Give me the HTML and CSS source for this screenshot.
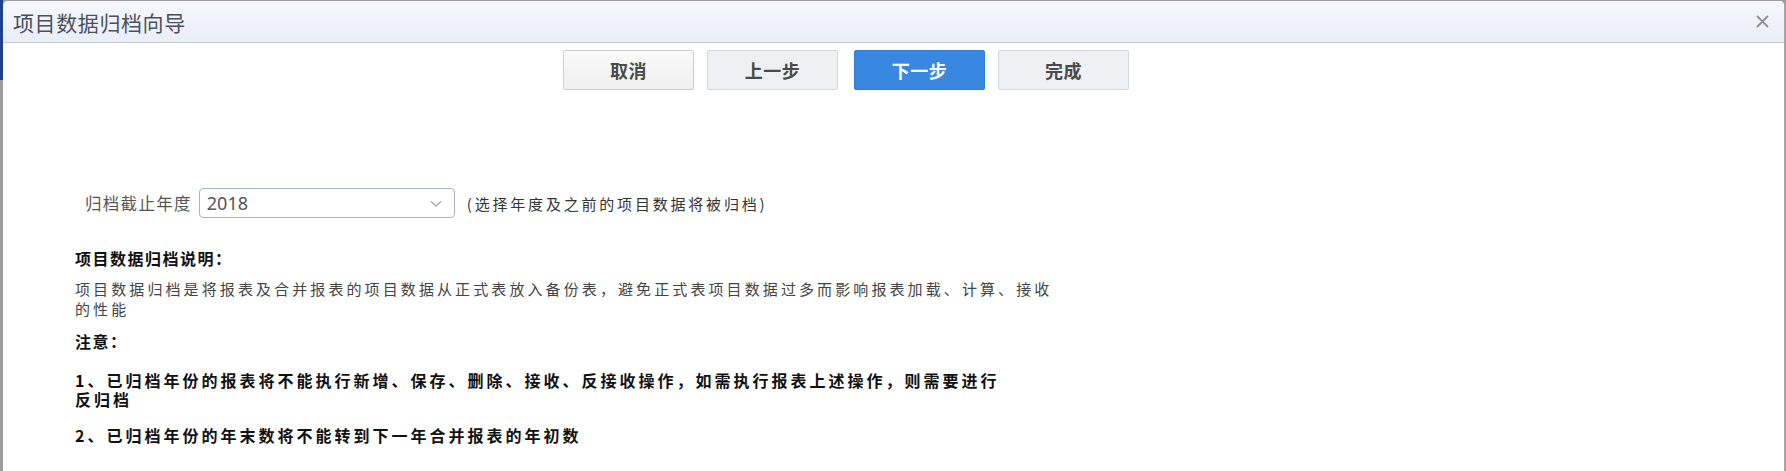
FILE: index.html
```html
<!DOCTYPE html>
<html lang="zh-CN">
<head>
<meta charset="utf-8">
<title>项目数据归档向导</title>
<link rel="stylesheet" href="styles.css">
</head>
<body>
<div class="dialog">
  <div class="titlebar">
    <span class="title">项目数据归档向导</span>
    <span class="close">
      <svg width="13" height="13" viewBox="0 0 13 13"><path d="M1.5 1.5 L11.5 11.5 M11.5 1.5 L1.5 11.5" stroke="#8d9199" stroke-width="1.8" stroke-linecap="round"/></svg>
    </span>
  </div>
  <div class="toolbar">
    <button class="btn btn-cancel">取消</button>
    <button class="btn">上一步</button>
    <button class="btn btn-primary">下一步</button>
    <button class="btn">完成</button>
  </div>
  <div class="form-row">
    <span class="label">归档截止年度</span>
    <div class="select">
      <span class="value">2018</span>
      <svg class="chev" width="12" height="8" viewBox="0 0 12 8"><path d="M1 1.5 L6 6 L11 1.5" fill="none" stroke="#a4a9b2" stroke-width="1.4"/></svg>
    </div>
    <span class="hint">(选择年度及之前的项目数据将被归档)</span>
  </div>
  <div class="notes">
    <div class="heading">项目数据归档说明：</div>
    <p class="desc">项目数据归档是将报表及合并报表的项目数据从正式表放入备份表，避免正式表项目数据过多而影响报表加载、计算、接收的性能</p>
    <div class="heading heading-note">注意：</div>
    <p class="item item-first">1、已归档年份的报表将不能执行新增、保存、删除、接收、反接收操作，如需执行报表上述操作，则需要进行反归档</p>
    <p class="item">2、已归档年份的年末数将不能转到下一年合并报表的年初数</p>
  </div>
</div>
</body>
</html>
```

FILE: styles.css
```css
html, body {
  margin: 0;
  padding: 0;
  height: 471px;
  overflow: hidden;
}
body {
  background: linear-gradient(#21408f, #21408f) no-repeat 0 0 / 3px 80px, #9c9c9c;
  font-family: "Noto Sans CJK SC", "Noto Sans", sans-serif;
}
.dialog {
  margin: 1px 1px 0 3px;
  height: 470px;
  background: #fff;
  border-radius: 5px 5px 0 0;
  border-right: 1px solid #a8a8a8;
  overflow: hidden;
}
.titlebar {
  height: 41px;
  border-bottom: 1px solid #c9ccd3;
  background: linear-gradient(#f6f8fd, #e9edf7);
  display: flex;
  align-items: center;
  justify-content: space-between;
  padding: 0 15px 0 10px;
}
.title {
  font-size: 21px;
  letter-spacing: 0.6px;
  color: #4b505d;
}
.close {
  display: flex;
  align-items: center;
}
.toolbar {
  display: flex;
  gap: 13px;
  margin: 7px 0 0 560px;
}
.btn {
  width: 131px;
  height: 40px;
  border: 1px solid #d3d6db;
  border-radius: 2px;
  background: #eef0f3;
  color: #4a4a4a;
  font-family: "Noto Sans CJK SC", sans-serif;
  font-size: 18px;
  font-weight: bold;
  letter-spacing: 0.5px;
  padding: 0;
}
.btn-cancel {
  background: linear-gradient(#fafafa, #efefef);
  border-color: #cfcfcf;
}
.btn-primary {
  background: #3887e0;
  border-color: #2b7fd6;
  color: #fff;
  margin-left: 3px;
}
.form-row {
  display: flex;
  align-items: center;
  margin: 98px 0 0 82px;
  height: 30px;
}
.label {
  font-size: 16.5px;
  letter-spacing: 1.3px;
  color: #555;
  margin-right: 7px;
}
.select {
  height: 28px;
  border: 1px solid #a7b2ca;
  border-radius: 4px;
  display: flex;
  align-items: center;
  justify-content: space-between;
  padding: 0 12px 0 7px;
  box-sizing: content-box;
  width: 235px;
}
.value {
  font-family: "Noto Sans", sans-serif;
  font-size: 18px;
  color: #555;
}
.chev {
  margin-top: 1px;
}
.hint {
  margin-left: 12px;
  font-size: 15px;
  letter-spacing: 2.8px;
  color: #333;
}
.notes {
  margin: 30px 0 0 72px;
}
.heading {
  font-size: 16px;
  font-weight: bold;
  letter-spacing: 1.5px;
  color: #111;
  line-height: 20px;
}
.desc {
  width: 985px;
  margin: 11px 0 0;
  font-size: 15px;
  letter-spacing: 3.1px;
  line-height: 20px;
  color: #444;
}
.heading-note {
  margin-top: 12px;
}
.item {
  width: 935px;
  margin: 0;
  font-size: 16px;
  font-weight: bold;
  letter-spacing: 3px;
  line-height: 19px;
  color: #111;
}
.item-first {
  margin-top: 20px;
}
.item + .item {
  margin-top: 17px;
}
```
